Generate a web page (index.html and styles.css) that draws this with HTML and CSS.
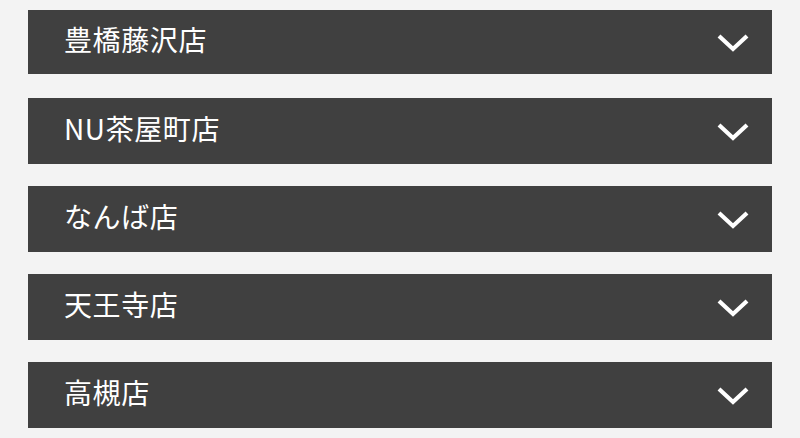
FILE: index.html
```html
<!DOCTYPE html>
<html lang="ja">
<head>
<meta charset="utf-8">
<link rel="stylesheet" href="styles.css">
</head>
<body>
<div class="list">
  <div class="item first"><span class="name">豊橋藤沢店</span><svg class="chev" viewBox="0 0 32 18"><polyline points="2,2 16,15 30,2"/></svg></div>
  <div class="item"><span class="name">NU茶屋町店</span><svg class="chev" viewBox="0 0 32 18"><polyline points="2,2 16,15 30,2"/></svg></div>
  <div class="item"><span class="name">なんば店</span><svg class="chev" viewBox="0 0 32 18"><polyline points="2,2 16,15 30,2"/></svg></div>
  <div class="item"><span class="name">天王寺店</span><svg class="chev" viewBox="0 0 32 18"><polyline points="2,2 16,15 30,2"/></svg></div>
  <div class="item"><span class="name">高槻店</span><svg class="chev" viewBox="0 0 32 18"><polyline points="2,2 16,15 30,2"/></svg></div>
</div>
</body>
</html>
```
FILE: styles.css
```css
html, body {
  margin: 0;
  padding: 0;
  background: #f3f3f3;
}
body {
  font-family: "Noto Sans CJK JP", "Noto Sans", sans-serif;
}
.list {
  display: flex;
  flex-direction: column;
  gap: 22px;
  padding: 10px 28px;
}
.item {
  display: flex;
  align-items: center;
  justify-content: space-between;
  height: 66px;
  background: #404040;
  color: #ffffff;
  padding: 0 23px 0 36px;
  box-sizing: border-box;
}
.item.first {
  height: 64px;
  margin-bottom: 2px;
}
.name {
  font-size: 28px;
  letter-spacing: 0.6px;
  line-height: 1;
  padding-bottom: 6px;
}
.chev {
  width: 32px;
  height: 18px;
  margin-top: 1px;
  fill: none;
  stroke: #ffffff;
  stroke-width: 4.2;
  stroke-linecap: butt;
  stroke-linejoin: miter;
}
```
